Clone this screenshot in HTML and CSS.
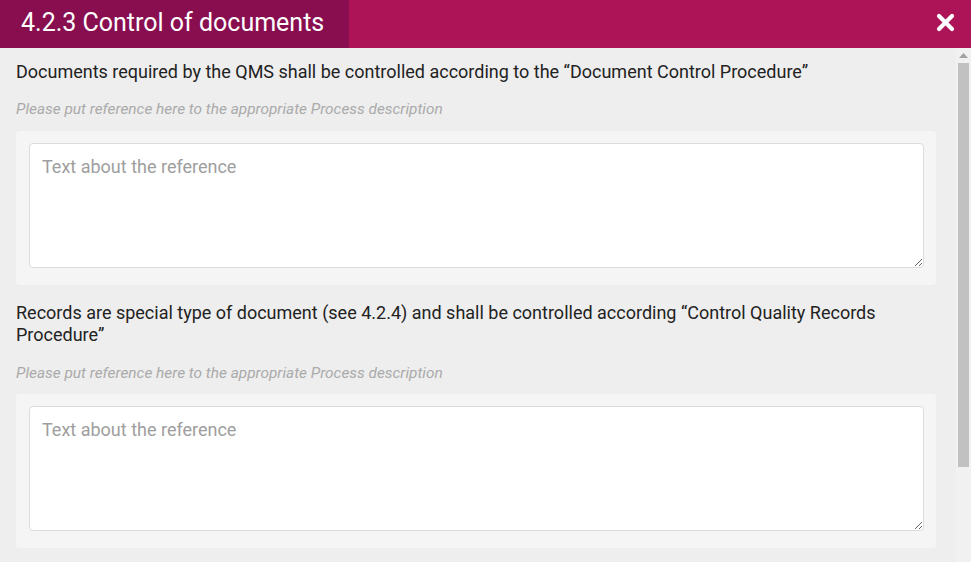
FILE: index.html
```html
<!DOCTYPE html>
<html lang="en">
<head>
<meta charset="utf-8">
<title>4.2.3 Control of documents</title>
<link rel="stylesheet" href="styles.css">
</head>
<body>
<div class="dialog">
  <header class="header">
    <h1 class="title">4.2.3 Control of documents</h1>
    <button class="close" aria-label="Close">
      <svg width="19" height="19" viewBox="0 0 19 19"><path d="M3 3 L16 16 M16 3 L3 16" stroke="#fff" stroke-width="4.2" stroke-linecap="round" fill="none"/></svg>
    </button>
  </header>
  <div class="body">
    <main class="content">
      <section class="item">
        <p class="question">Documents required by the QMS shall be controlled according to the “Document Control Procedure”</p>
        <p class="hint">Please put reference here to the appropriate Process description</p>
        <div class="box"><textarea class="answer" placeholder="Text about the reference"></textarea></div>
      </section>
      <section class="item">
        <p class="question">Records are special type of document (see 4.2.4) and shall be controlled according “Control Quality Records Procedure”</p>
        <p class="hint">Please put reference here to the appropriate Process description</p>
        <div class="box"><textarea class="answer" placeholder="Text about the reference"></textarea></div>
      </section>
    </main>
    <div class="scrollbar" aria-hidden="true">
      <div class="arrow"><svg width="9" height="5" viewBox="0 0 9 5"><path d="M0 5 L4.5 0 L9 5 Z" fill="#a3a3a3"/></svg></div>
      <div class="thumb"></div>
    </div>
  </div>
</div>
</body>
</html>
```
FILE: styles.css
```css
html, body {
  margin: 0;
  padding: 0;
  height: 100%;
  overflow: hidden;
}
body {
  font-family: Roboto, "Liberation Sans", sans-serif;
  background: #eeeeee;
  color: #222;
}
.dialog {
  display: flex;
  flex-direction: column;
  height: 562px;
}
.header {
  flex: 0 0 48px;
  height: 48px;
  display: flex;
  align-items: stretch;
  background: #ad1457;
}
.title {
  margin: 0;
  width: 349px;
  box-sizing: border-box;
  padding: 0 0 0 21px;
  background: #880e4f;
  color: #fff;
  font-weight: 400;
  font-size: 25px;
  line-height: 46px;
}
.close {
  margin-left: auto;
  width: 50px;
  border: 0;
  background: transparent;
  padding: 0 16px 3px 0;
  display: flex;
  align-items: center;
  justify-content: flex-end;
  cursor: pointer;
}
.body {
  flex: 1;
  display: flex;
  min-height: 0;
}
.content {
  flex: 1;
  min-width: 0;
  overflow: hidden;
  padding: 13px 20px 0 16px;
}
.scrollbar {
  flex: 0 0 15px;
  background: #f1f1f1;
  display: flex;
  flex-direction: column;
  align-items: center;
}
.arrow {
  height: 15px;
  width: 15px;
  display: flex;
  align-items: center;
  justify-content: center;
}
.thumb {
  width: 11px;
  height: 404px;
  background: #c1c1c1;
}
.item + .item {
  margin-top: 17px;
}
.question {
  margin: 0;
  font-size: 18px;
  line-height: 22px;
  color: #222;
}
.hint {
  margin: 16px 0 12px;
  font-size: 15.4px;
  line-height: 20px;
  font-style: italic;
  color: #aaaaaa;
}
.item + .item .hint {
  margin: 17px 0 11px;
}
.box {
  background: #f5f5f5;
  border-radius: 3px;
  padding: 12px 12px 17px 13px;
}
.answer {
  display: block;
  width: 100%;
  height: 125px;
  box-sizing: border-box;
  border: 1px solid #dcdcdc;
  border-radius: 4px;
  background: #fff;
  padding: 12px 12px;
  font-family: Roboto, "Liberation Sans", sans-serif;
  font-size: 18px;
  line-height: 21px;
  color: #333;
  resize: vertical;
  margin: 0;
}
.answer::placeholder {
  color: #9e9e9e;
}
```
